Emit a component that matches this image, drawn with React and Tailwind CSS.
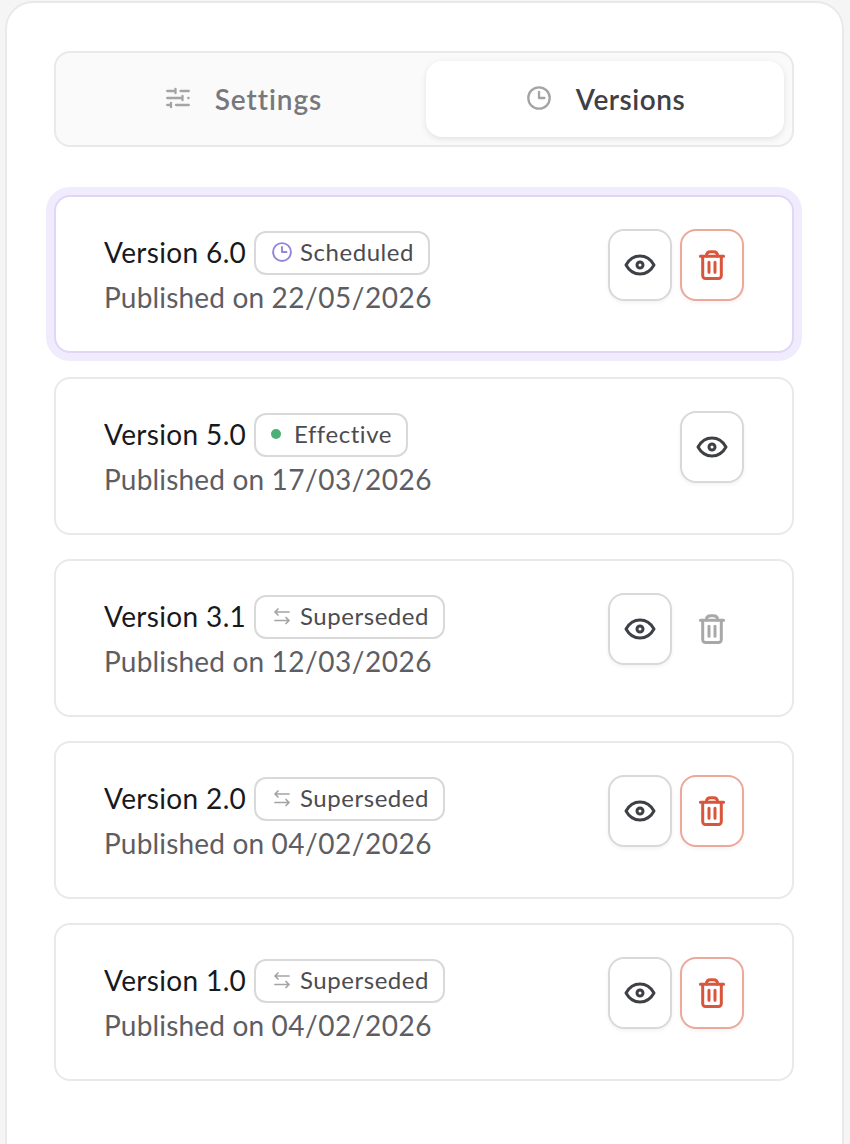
const versions = [
  { name: 'Version 6.0', date: '22/05/2026', status: 'Scheduled', canDelete: true },
  { name: 'Version 5.0', date: '17/03/2026', status: 'Effective' },
  { name: 'Version 3.1', date: '12/03/2026', status: 'Superseded', deleteDisabled: true },
  { name: 'Version 2.0', date: '04/02/2026', status: 'Superseded', canDelete: true },
  { name: 'Version 1.0', date: '04/02/2026', status: 'Superseded', canDelete: true },
]

const badgeWidths = {
  Scheduled: 'w-[176px]',
  Effective: 'w-[154px]',
  Superseded: 'w-[191px]',
}

function SlidersIcon() {
  return (
    <svg className="-mt-0.5 h-6 w-6 shrink-0" viewBox="0 0 24 24" fill="none" stroke="#a4a4a7" strokeWidth="2.3" strokeLinecap="round">
      <path d="M1.2 5h8.3M14.5 5h8.3M9.5 2.8v4.4M1.2 12h15.3M16.5 9.8v4.4M22.2 12h.4M1.2 19H5M5 16.8v4.4M10 19h12.8" />
    </svg>
  )
}

function ClockIcon({ className }) {
  return (
    <svg className={className} viewBox="0 0 24 24" fill="none" stroke="currentColor" strokeWidth="2.3" strokeLinecap="round" strokeLinejoin="round">
      <circle cx="12" cy="12" r="10.7" />
      <path d="M12 6v6h5.4" />
    </svg>
  )
}

function SwapIcon() {
  return (
    <svg className="h-5 w-5 shrink-0" viewBox="0 0 20 20" fill="none" stroke="#a4a4a7" strokeWidth="1.7" strokeLinecap="round" strokeLinejoin="round">
      <path d="M17 6H3M6 3 3 6l3 3M3 14.5h14M14 11.5l3 3-3 3" />
    </svg>
  )
}

function EyeIcon() {
  return (
    <svg className="h-8 w-8" viewBox="0 0 32 32" fill="none" stroke="#3f4045" strokeWidth="3" strokeLinejoin="round">
      <path d="M2 16C5 10.6 10.2 7 16 7S27 10.6 30 16C27 21.4 21.8 25 16 25S5 21.4 2 16Z" />
      <circle cx="16" cy="16" r="3" />
    </svg>
  )
}

function TrashIcon() {
  return (
    <svg className="h-8 w-8" viewBox="0 0 32 32" fill="none" stroke="currentColor" strokeWidth="3" strokeLinecap="round" strokeLinejoin="round">
      <path d="M4.400 7.200h23.200M6.700 7.200v19.600a2.700 2.700 0 0 0 2.700 2.700h13.200a2.700 2.700 0 0 0 2.700-2.700V7.200" />
      <path d="M10.400 7c0-2.800 1.700-4.200 4.200-4.200h2.800c2.500 0 4.200 1.400 4.200 4.200" />
      <path d="M13 13.200v10M19 13.200v10" />
    </svg>
  )
}

function StatusBadge({ status }) {
  return (
    <span className={`mt-0.5 flex h-11 items-center rounded-xl border-2 border-[#d9d9da] pl-4 ${badgeWidths[status]}`}>
      {status === 'Scheduled' && <ClockIcon className="-mt-0.5 mr-2 h-5 w-5 shrink-0 text-[#9384dc]" />}
      {status === 'Superseded' && <span className="-mt-0.5 mr-2"><SwapIcon /></span>}
      {status === 'Effective' && <span className="-mt-0.5 -ml-px mr-[13px] h-2.5 w-2.5 rounded-full bg-[#4caf73]" />}
      <span className="-mt-0.5 text-2xl leading-none tracking-[0.55px] whitespace-nowrap text-[#4b4c51]">{status}</span>
    </span>
  )
}

function VersionCard({ version }) {
  const border =
    version.status === 'Scheduled'
      ? 'border-[#e0d6f7] ring-8 ring-[#f0ebfd]'
      : 'border-[#e9e9ea]'
  return (
    <div className={`flex h-[158px] items-start justify-between rounded-2xl border-2 bg-white px-12 py-8 ${border}`}>
      <div>
        <div className="flex h-[45px] items-start gap-2">
          <span className="w-[142px] pt-px text-[28px] leading-[45px] tracking-[0.35px] whitespace-nowrap text-[#18191d]">{version.name}</span>
          <StatusBadge status={version.status} />
        </div>
        <p className="pt-px text-[28px] leading-[45px] whitespace-nowrap text-[#5d5e63]">
          <span className="tracking-[0.17px]">Published on </span>
          <span className="tracking-[0.52px]">{version.date}</span>
        </p>
      </div>
      <div className="flex gap-2">
        <button className="flex h-[72px] w-16 items-center justify-center rounded-2xl border-2 border-[#d9d9da] bg-white shadow-[0_2px_4px_rgba(0,0,0,0.05)]">
          <EyeIcon />
        </button>
        {version.canDelete && (
          <button className="flex h-[72px] w-16 items-center justify-center rounded-2xl border-2 border-[#eba99c] bg-white text-[#d9563c] shadow-[0_2px_4px_rgba(0,0,0,0.05)]">
            <TrashIcon />
          </button>
        )}
        {version.deleteDisabled && (
          <button disabled className="flex h-[72px] w-16 items-center justify-center text-[#a8a8aa]">
            <TrashIcon />
          </button>
        )}
      </div>
    </div>
  )
}

export default function App() {
  return (
    <div className="h-[1144px] w-[850px] overflow-hidden bg-[#f5f5f5] pt-px pl-[5px] font-['Lato','Liberation_Sans',sans-serif]">
      <div className="h-[1200px] w-[839px] rounded-[28px] border-2 border-[#e9e9ea] bg-white px-[47px] pt-12">
        <div className="flex h-24 w-[740px] gap-1 rounded-2xl border-2 border-[#e9e9ea] bg-[#fafafa] p-2 text-[28px] font-semibold">
          <button className="flex w-[358px] items-center justify-center gap-[25px] pl-0.5 text-[#77787d]">
            <SlidersIcon />
            <span className="tracking-[0.95px]">Settings</span>
          </button>
          <button className="flex w-[358px] items-center justify-center gap-[25px] rounded-2xl bg-white pl-0.5 text-[#3f4045] shadow-[0_2px_6px_rgba(0,0,0,0.1)]">
            <ClockIcon className="-mt-0.5 h-6 w-6 shrink-0 text-[#a4a4a7]" />
            <span className="tracking-[0.5px]">Versions</span>
          </button>
        </div>
        <div className="mt-12 flex w-[740px] flex-col gap-6">
          {versions.map((version) => (
            <VersionCard key={version.name} version={version} />
          ))}
        </div>
      </div>
    </div>
  )
}
